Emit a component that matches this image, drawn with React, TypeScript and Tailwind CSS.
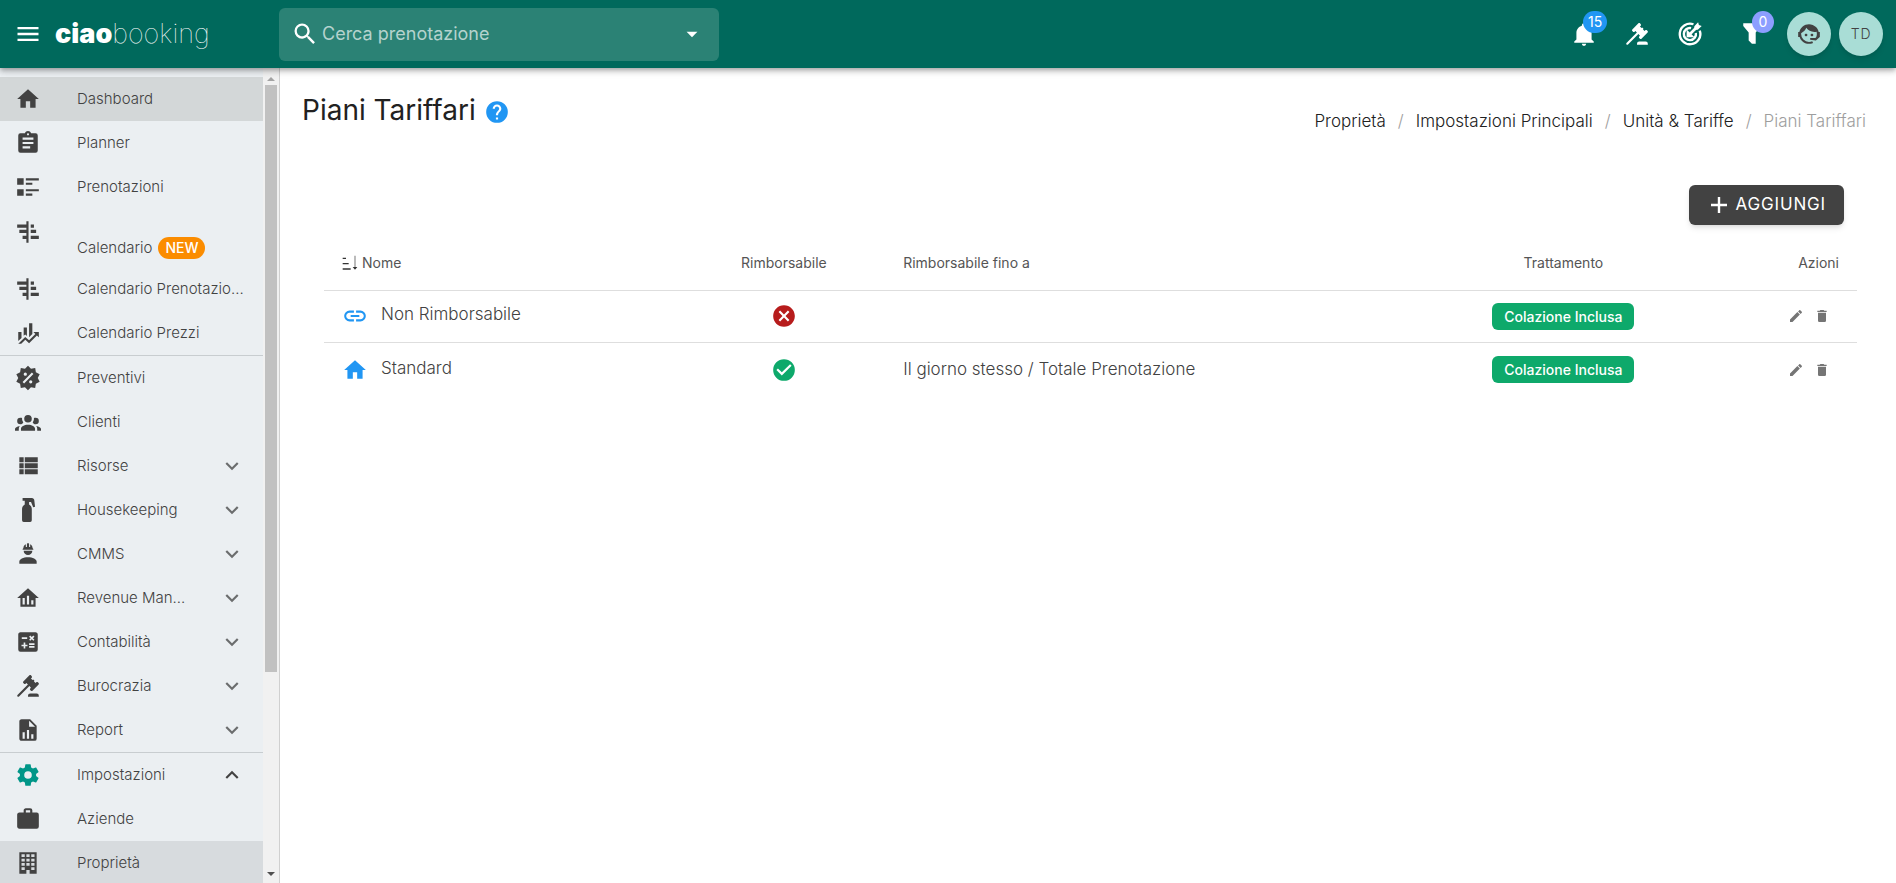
import { useState } from "react";
import type { ReactNode } from "react";
import clsx from "clsx";

type IconName = keyof typeof ICONS;

type NavItem = {
  label: string;
  icon: IconName;
  badge?: string;
  chevron?: "down" | "up";
  active?: boolean;
  current?: boolean;
  accent?: boolean;
  divider?: boolean;
};

type RatePlan = {
  name: string;
  icon: IconName;
  refundable: boolean;
  until: string;
  board: string;
};

const ICONS = {
  menu: "M3,6H21V8H3V6M3,11H21V13H3V11M3,16H21V18H3V16Z",
  magnify:
    "M9.5,3A6.5,6.5 0 0,1 16,9.5C16,11.11 15.41,12.59 14.44,13.73L14.71,14H15.5L20.5,19L19,20.5L14,15.5V14.71L13.73,14.44C12.59,15.41 11.11,16 9.5,16A6.5,6.5 0 0,1 3,9.5A6.5,6.5 0 0,1 9.5,3M9.5,5C7,5 5,7 5,9.5C5,12 7,14 9.5,14C12,14 14,12 14,9.5C14,7 12,5 9.5,5Z",
  menuDown: "M7,10L12,15L17,10H7Z",
  bell: "M21,19V20H3V19L5,17V11C5,7.9 7.03,5.17 10,4.29C10,4.19 10,4.1 10,4A2,2 0 0,1 12,2A2,2 0 0,1 14,4C14,4.1 14,4.19 14,4.29C16.97,5.17 19,7.9 19,11V17L21,19M14,21A2,2 0 0,1 12,23A2,2 0 0,1 10,21",
  filter: "M3,2H19V5L14.5,10.5V21H11L8,18V10.5L3,4.5V2Z",
  agent:
    "M18.72,14.76C19.07,13.91 19.26,13 19.26,12C19.26,11.28 19.15,10.59 18.96,9.95C18.31,10.1 17.63,10.18 16.92,10.18C13.86,10.18 11.15,8.67 9.5,6.34C8.61,8.5 6.91,10.26 4.77,11.22C4.73,11.47 4.73,11.74 4.73,12A7.27,7.27 0 0,0 12,19.27C13.05,19.27 14.06,19.04 14.97,18.63C15.54,19.72 15.8,20.26 15.78,20.26C14.14,20.81 12.87,21.08 12,21.08C9.58,21.08 7.27,20.13 5.57,18.42C4.53,17.38 3.76,16.11 3.33,14.73H2V10.18H3.09C3.93,6.04 7.6,2.92 12,2.92C14.4,2.92 16.71,3.87 18.42,5.58C19.69,6.84 20.54,8.45 20.89,10.18H22V14.73H21.94L18.38,18L13.08,17.4V15.73H17.91L18.72,14.76M9.27,11.77A1.14,1.14 0 1,1 9.27,14.04A1.14,1.14 0 1,1 9.27,11.77M14.72,11.77A1.14,1.14 0 1,1 14.72,14.04A1.14,1.14 0 1,1 14.72,11.77Z",
  home: "M10,20V14H14V20H19V12H22L12,3L2,12H5V20H10Z",
  clipboard:
    "M17,9H7V7H17M17,13H7V11H17M14,17H7V15H14M12,3A1,1 0 0,1 13,4A1,1 0 0,1 12,5A1,1 0 0,1 11,4A1,1 0 0,1 12,3M19,3H14.82C14.4,1.84 13.3,1 12,1C10.7,1 9.6,1.84 9.18,3H5A2,2 0 0,0 3,5V19A2,2 0 0,0 5,21H19A2,2 0 0,0 21,19V5A2,2 0 0,0 19,3Z",
  listText: "M2,14H8V20H2M16,8H10V10H16M2,10H8V4H2M10,4V6H22V4M10,20H16V18H10M10,16H22V14H10",
  gantt:
    "M10.5,2H12.5V22H10.5V18.5H7V15.5H10.5V13H4V10H10.5V8H2V5H10.5V2M14.5,5H17.5V8H14.5V5M14.5,10H19.5V13H14.5V10M14.5,15.5H22V18.5H14.5V15.5Z",
  finance:
    "M6,16.5L3,19.44V11H6M11,14.66L9.43,13.32L8,14.64V7H11M16,13L13,16V3H16M18.81,12.81L17,11H22V16L20.21,14.21L13,21.36L9.53,18.34L5.75,22H3L9.47,15.66L13,18.64",
  sale: "M18.65,2.85L19.26,6.71L22.77,8.5L21,12L22.78,15.5L19.24,17.29L18.63,21.15L14.74,20.54L11.97,23.3L9.19,20.5L5.33,21.14L4.71,17.25L1.22,15.47L3,11.97L1.23,8.5L4.74,6.69L5.35,2.86L9.22,3.5L12,0.69L14.77,3.46L18.65,2.85M9.5,7A1.5,1.5 0 0,0 8,8.5A1.5,1.5 0 0,0 9.5,10A1.5,1.5 0 0,0 11,8.5A1.5,1.5 0 0,0 9.5,7M14.5,14A1.5,1.5 0 0,0 13,15.5A1.5,1.5 0 0,0 14.5,17A1.5,1.5 0 0,0 16,15.5A1.5,1.5 0 0,0 14.5,14M8.41,17L17,8.41L15.59,7L7,15.59L8.41,17Z",
  group:
    "M12,5.5A3.5,3.5 0 0,1 15.5,9A3.5,3.5 0 0,1 12,12.5A3.5,3.5 0 0,1 8.5,9A3.5,3.5 0 0,1 12,5.5M5,8C5.56,8 6.08,8.15 6.53,8.42C6.38,9.85 6.8,11.27 7.66,12.38C7.16,13.34 6.16,14 5,14A3,3 0 0,1 2,11A3,3 0 0,1 5,8M19,8A3,3 0 0,1 22,11A3,3 0 0,1 19,14C17.84,14 16.84,13.34 16.34,12.38C17.2,11.27 17.62,9.85 17.47,8.42C17.92,8.15 18.44,8 19,8M5.5,18.25C5.5,16.18 8.41,14.5 12,14.5C15.59,14.5 18.5,16.18 18.5,18.25V20H5.5V18.25M0,20V18.5C0,17.11 1.89,15.94 4.45,15.6C3.86,16.28 3.5,17.22 3.5,18.25V20H0M24,20H20.5V18.25C20.5,17.22 20.14,16.28 19.55,15.6C22.11,15.94 24,17.11 24,18.5V20Z",
  viewList: "M9,4V8.5H21V4M9,19.5H21V15H9M9,14H21V9.5H9M4,8.5H8V4H4M4,19.5H8V15H4M4,14H8V9.5H4V14Z",
  spray:
    "M7,1H15.5C17,1 17.6,2 17.8,3L18.5,9L16.8,9.5L14.8,4.5H13V7C14.8,8.2 15.5,9.5 15.5,11V21.5A1.5,1.5 0 0,1 14,23H8A1.5,1.5 0 0,1 6.5,21.5V11C6.5,9.5 7.2,8.2 9,7V3.5H7V1Z",
  hardHat:
    "M12,15C7.58,15 4,16.79 4,19V21H20V19C20,16.79 16.42,15 12,15M8,9A4,4 0 0,0 12,13A4,4 0 0,0 16,9M11.5,2C11.2,2 11,2.21 11,2.5V5.5H10V3C10,3 7.75,3.86 7.75,6.75C7.75,6.75 7,6.89 7,8H17C16.95,6.89 16.25,6.75 16.25,6.75C16.25,3.86 14,3 14,3V5.5H13V2.5C13,2.21 12.81,2 12.5,2H11.5Z",
  homeChart: "M12,3L2,12H5V20H19V12H22L12,3M9,18H7V12H9V18M13,18H11V10H13V18M17,18H15V14H17V18Z",
  calculator:
    "M19,3H5C3.89,3 3,3.89 3,5V19A2,2 0 0,0 5,21H19A2,2 0 0,0 21,19V5C21,3.89 20.1,3 19,3M13.03,7.06L14.09,6L15.5,7.41L16.91,6L17.97,7.06L16.56,8.47L17.97,9.88L16.91,10.94L15.5,9.54L14.09,10.95L13.03,9.89L14.44,8.47L13.03,7.06M6.25,7.72H11.25V9.22H6.25V7.72M11.5,16H9.5V18H8V16H6V14.5H8V12.5H9.5V14.5H11.5V16M18,17.25H13V15.75H18V17.25M18,14.75H13V13.25H18V14.75Z",
  gavel:
    "M2.3,20.28L11.9,10.68L10.5,9.26L9.78,9.97C9.39,10.36 8.76,10.36 8.37,9.97L7.66,9.26C7.27,8.87 7.27,8.24 7.66,7.85L13.32,2.19C13.71,1.8 14.34,1.8 14.73,2.19L15.44,2.9C15.83,3.29 15.83,3.92 15.44,4.31L14.73,5L16.15,6.43C16.54,6.04 17.17,6.04 17.56,6.43C17.95,6.82 17.95,7.46 17.56,7.85L18.97,9.26L19.68,8.55C20.07,8.16 20.71,8.16 21.1,8.55L21.8,9.26C22.19,9.65 22.19,10.29 21.8,10.68L16.15,16.33C15.76,16.72 15.12,16.72 14.73,16.33L14.03,15.63C13.63,15.24 13.63,14.6 14.03,14.21L14.73,13.5L13.32,12.09L3.71,21.7C3.32,22.09 2.69,22.09 2.3,21.7C1.91,21.31 1.91,20.67 2.3,20.28M20,19A2,2 0 0,1 22,21V22H12V21A2,2 0 0,1 14,19H20Z",
  fileChart:
    "M13,9H18.5L13,3.5V9M6,2H14L20,8V20A2,2 0 0,1 18,22H6C4.89,22 4,21.1 4,20V4C4,2.89 4.89,2 6,2M7,20H9V14H7V20M11,20H13V12H11V20M15,20H17V16H15V20Z",
  cog: "M12,15.5A3.5,3.5 0 0,1 8.5,12A3.5,3.5 0 0,1 12,8.5A3.5,3.5 0 0,1 15.5,12A3.5,3.5 0 0,1 12,15.5M19.43,12.97C19.47,12.65 19.5,12.33 19.5,12C19.5,11.67 19.47,11.34 19.43,11L21.54,9.37C21.73,9.22 21.78,8.95 21.66,8.73L19.66,5.27C19.54,5.05 19.27,4.96 19.05,5.05L16.56,6.05C16.04,5.66 15.5,5.32 14.87,5.07L14.5,2.42C14.46,2.18 14.25,2 14,2H10C9.75,2 9.54,2.18 9.5,2.42L9.13,5.07C8.5,5.32 7.96,5.66 7.44,6.05L4.95,5.05C4.73,4.96 4.46,5.05 4.34,5.27L2.34,8.73C2.21,8.95 2.27,9.22 2.46,9.37L4.57,11C4.53,11.34 4.5,11.67 4.5,12C4.5,12.33 4.53,12.65 4.57,12.97L2.46,14.63C2.27,14.78 2.21,15.05 2.34,15.27L4.34,18.73C4.46,18.95 4.73,19.03 4.95,18.95L7.44,17.94C7.96,18.34 8.5,18.68 9.13,18.93L9.5,21.58C9.54,21.82 9.75,22 10,22H14C14.25,22 14.46,21.82 14.5,21.58L14.87,18.93C15.5,18.67 16.04,18.34 16.56,17.94L19.05,18.95C19.27,19.03 19.54,18.95 19.66,18.73L21.66,15.27C21.78,15.05 21.73,14.78 21.54,14.63L19.43,12.97Z",
  briefcase:
    "M10,2H14A2,2 0 0,1 16,4V6H20A2,2 0 0,1 22,8V19A2,2 0 0,1 20,21H4C2.89,21 2,20.1 2,19V8C2,6.89 2.89,6 4,6H8V4C8,2.89 8.89,2 10,2M14,6V4H10V6H14Z",
  building:
    "M4,2V22H10.5V18.5H13.5V22H20V2H4M6,4H9V6.5H6V4M10.5,4H13.5V6.5H10.5V4M15,4H18V6.5H15V4M6,8H9V10.5H6V8M10.5,8H13.5V10.5H10.5V8M15,8H18V10.5H15V8M6,12H9V14.5H6V12M10.5,12H13.5V14.5H10.5V12M15,12H18V14.5H15V12M6,16H9V18.5H6V16M15,16H18V18.5H15V16Z",
  chevronDown: "M7.41,8.58L12,13.17L16.59,8.58L18,10L12,16L6,10L7.41,8.58Z",
  chevronUp: "M7.41,15.41L12,10.83L16.59,15.41L18,14L12,8L6,14L7.41,15.41Z",
  help: "M12,2A10,10 0 1,0 22,12A10,10 0 0,0 12,2M13,19H11V17H13V19M15.07,11.25L14.17,12.17C13.45,12.9 13,13.5 13,15H11V14.5C11,13.39 11.45,12.39 12.17,11.67L13.41,10.41C13.78,10.05 14,9.55 14,9C14,7.89 13.1,7 12,7A2,2 0 0,0 10,9H8A4,4 0 0,1 12,5A4,4 0 0,1 16,9C16,9.88 15.64,10.67 15.07,11.25Z",
  plus: "M20,13.2H13.2V20H10.8V13.2H4V10.8H10.8V4H13.2V10.8H20V13.2Z",
  sort: "M20,18H23L19.5,22L16,18H19V1H20V18M1,20H13V22H1M6,4V6H1V4M1,12H10V14H1V12Z",
  link: "M3.9,12C3.9,10.29 5.29,8.9 7,8.9H11V7H7A5,5 0 0,0 2,12A5,5 0 0,0 7,17H11V15.1H7C5.29,15.1 3.9,13.71 3.9,12M8,13H16V11H8V13M17,7H13V8.9H17C18.71,8.9 20.1,10.29 20.1,12C20.1,13.71 18.71,15.1 17,15.1H13V17H17A5,5 0 0,0 22,12A5,5 0 0,0 17,7Z",
  closeCircle:
    "M12,2C17.53,2 22,6.47 22,12C22,17.53 17.53,22 12,22C6.47,22 2,17.53 2,12C2,6.47 6.47,2 12,2M15.59,7L12,10.59L8.41,7L7,8.41L10.59,12L7,15.59L8.41,17L12,13.41L15.59,17L17,15.59L13.41,12L17,8.41L15.59,7Z",
  checkCircle:
    "M12,2A10,10 0 0,1 22,12A10,10 0 0,1 12,22A10,10 0 0,1 2,12A10,10 0 0,1 12,2M10,17L19,8L17.59,6.58L10,14.17L6.41,10.59L5,12L10,17Z",
  pencil:
    "M20.71,7.04C21.1,6.65 21.1,6 20.71,5.63L18.37,3.29C18,2.9 17.35,2.9 16.96,3.29L15.12,5.12L18.87,8.87M3,17.25V21H6.75L17.81,9.93L14.06,6.18L3,17.25Z",
  trash: "M19,4H15.5L14.5,3H9.5L8.5,4H5V6H19M6,19A2,2 0 0,0 8,21H16A2,2 0 0,0 18,19V7H6V19Z",
};

const NAV: NavItem[] = [
  { label: "Dashboard", icon: "home", active: true },
  { label: "Planner", icon: "clipboard" },
  { label: "Prenotazioni", icon: "listText" },
  { label: "Calendario", icon: "gantt", badge: "NEW" },
  { label: "Calendario Prenotazio...", icon: "gantt" },
  { label: "Calendario Prezzi", icon: "finance" },
  { label: "Preventivi", icon: "sale", divider: true },
  { label: "Clienti", icon: "group" },
  { label: "Risorse", icon: "viewList", chevron: "down" },
  { label: "Housekeeping", icon: "spray", chevron: "down" },
  { label: "CMMS", icon: "hardHat", chevron: "down" },
  { label: "Revenue Man...", icon: "homeChart", chevron: "down" },
  { label: "Contabilità", icon: "calculator", chevron: "down" },
  { label: "Burocrazia", icon: "gavel", chevron: "down" },
  { label: "Report", icon: "fileChart", chevron: "down" },
  { label: "Impostazioni", icon: "cog", chevron: "up", accent: true, divider: true },
  { label: "Aziende", icon: "briefcase" },
  { label: "Proprietà", icon: "building", current: true },
];

const PLANS: RatePlan[] = [
  { name: "Non Rimborsabile", icon: "link", refundable: false, until: "", board: "Colazione Inclusa" },
  {
    name: "Standard",
    icon: "home",
    refundable: true,
    until: "Il giorno stesso / Totale Prenotazione",
    board: "Colazione Inclusa",
  },
];

const CRUMBS = ["Proprietà", "Impostazioni Principali", "Unità & Tariffe"];

function Icon({ name, className }: { name: IconName; className?: string }) {
  return (
    <svg viewBox="0 0 24 24" fill="currentColor" aria-hidden="true" className={clsx("shrink-0", className)}>
      <path d={ICONS[name]} />
    </svg>
  );
}

function TargetIcon() {
  return (
    <svg viewBox="0 0 24 24" fill="none" stroke="currentColor" strokeWidth="2.2" aria-hidden="true" className="size-[26px]">
      <path d="M15.2 3A9.5 9.5 0 1 0 21 8.8" />
      <path d="M13 6.6A5.6 5.6 0 1 0 17.4 11" />
      <path d="M10.5 13.5L18 6" strokeWidth="2.6" />
      <path d="M10 10.5V14H13.5Z" fill="currentColor" />
      <path d="M16 8V4.8L19.5 1.2L20.2 3.8L22.8 4.5L19.2 8Z" fill="currentColor" stroke="none" />
    </svg>
  );
}

function HeaderButton({ label, badge, badgeClass, children }: {
  label: string;
  badge?: string;
  badgeClass?: string;
  children: ReactNode;
}) {
  return (
    <button type="button" aria-label={label} className="relative flex size-[26px] items-center justify-center">
      {children}
      {badge && (
        <span
          className={clsx(
            "absolute -top-2.5 left-3 flex h-[22px] min-w-[22px] items-center justify-center rounded-full px-[5px] text-sm",
            badgeClass,
          )}
        >
          {badge}
        </span>
      )}
    </button>
  );
}

function Header() {
  const [query, setQuery] = useState("");

  return (
    <header className="relative z-10 flex h-[68px] shrink-0 items-center bg-[#00695c] pr-[13px] text-white shadow-[0_2px_4px_-1px_rgba(0,0,0,0.2),0_4px_5px_rgba(0,0,0,0.14),0_1px_10px_rgba(0,0,0,0.12)]">
      <div className="flex w-[279px] shrink-0 items-center gap-[13px] pl-[14px]">
        <button type="button" aria-label="Menu">
          <Icon name="menu" className="size-7" />
        </button>
        <a href="#" className="text-[27px] leading-8">
          <span className="font-black">ciao</span>
          <span className="font-thin">booking</span>
        </a>
      </div>

      <label className="flex h-[53px] w-[440px] items-center gap-[3px] rounded-md bg-[#2b8275] pl-3 pr-[14px]">
        <Icon name="magnify" className="size-7" />
        <input
          value={query}
          onChange={(e) => setQuery(e.target.value)}
          placeholder="Cerca prenotazione"
          aria-label="Cerca prenotazione"
          className="min-w-0 flex-1 bg-transparent text-lg outline-none placeholder:text-[#b5d3ce]"
        />
        <Icon name="menuDown" className="size-[26px]" />
      </label>

      <div className="ml-auto flex items-center">
        <div className="mr-[21px] flex items-center gap-[27px]">
          <HeaderButton label="Notifiche" badge="15" badgeClass="bg-[#2196f3]">
            <Icon name="bell" className="size-[26px]" />
          </HeaderButton>
          <HeaderButton label="Burocrazia">
            <Icon name="gavel" className="size-[26px]" />
          </HeaderButton>
          <HeaderButton label="Obiettivi">
            <TargetIcon />
          </HeaderButton>
          <div className="ml-2.5">
            <HeaderButton label="Filtri" badge="0" badgeClass="bg-[#8c9eff]">
              <Icon name="filter" className="size-[26px]" />
            </HeaderButton>
          </div>
        </div>
        <div className="flex gap-2">
          <button
            type="button"
            aria-label="Assistenza"
            className="flex size-11 items-center justify-center rounded-full bg-[#a9ddd6] text-[#424242] shadow-md"
          >
            <Icon name="agent" className="size-[26px]" />
          </button>
          <button
            type="button"
            className="flex size-11 items-center justify-center rounded-full bg-[#a9ddd6] text-sm font-light tracking-wider text-[#424242] shadow-md"
          >
            TD
          </button>
        </div>
      </div>
    </header>
  );
}

function NavLink({ item }: { item: NavItem }) {
  return (
    <li className={clsx(item.divider && "border-t border-[#c8cdd0]")}>
      <a
        href="#"
        className={clsx(
          "flex pl-[15px] text-[#424242]",
          item.badge ? "h-[58px] items-start pt-2.5" : "h-11 items-center",
          item.active && "bg-[#d3d7d8]",
          item.current && "bg-[#d7dbde]",
        )}
      >
        <Icon name={item.icon} className={clsx("size-[26px]", item.accent && "text-[#009688]")} />
        <span
          className={clsx(
            "ml-9 flex-1 whitespace-nowrap text-[15px] font-light",
            item.badge ? "pt-[17px] leading-6" : "leading-5",
          )}
        >
          {item.label}
          {item.badge && (
            <span className="ml-1.5 inline-block rounded-full bg-[#fb8c00] px-[7px] text-sm font-medium leading-[22px] text-white">
              {item.badge}
            </span>
          )}
        </span>
        {item.chevron && (
          <Icon
            name={item.chevron === "up" ? "chevronUp" : "chevronDown"}
            className={clsx("mr-[18px] size-[26px]", item.chevron === "down" && "text-[#6b6d6e]")}
          />
        )}
      </a>
    </li>
  );
}

function Sidebar() {
  return (
    <aside className="flex w-[280px] shrink-0 overflow-hidden border-r border-[#d0d0d0] bg-[#ebeff2]">
      <nav className="w-[263px] shrink-0 pt-[9px]">
        <ul>
          {NAV.map((item) => (
            <NavLink key={item.label} item={item} />
          ))}
        </ul>
      </nav>
      {/* scrollbar */}
      <div className="flex flex-1 flex-col items-center bg-[#f1f1f1]">
        <div className="flex h-[17px] shrink-0 items-center pt-1">
          <svg viewBox="0 0 8 4" className="w-2 text-[#a3a3a3]" fill="currentColor">
            <path d="M0 4L4 0L8 4Z" />
          </svg>
        </div>
        <div className="h-[72%] w-3 bg-[#c1c1c1]" />
        <svg viewBox="0 0 8 4" className="mb-[7px] mt-auto w-2 text-[#505050]" fill="currentColor">
          <path d="M0 0L4 4L8 0Z" />
        </svg>
      </div>
    </aside>
  );
}

function PlansTable() {
  return (
    <table className="w-full table-fixed text-left text-[#424242]">
      <thead>
        <tr className="h-[54px] border-b border-[#dedede] text-sm text-[#555555]">
          <th className="w-[23%] pl-[18px] font-normal">
            <span className="flex items-center gap-1">
              <Icon name="sort" className="size-4 text-[#333333]" />
              Nome
            </span>
          </th>
          <th className="w-[14%] text-center font-normal">Rimborsabile</th>
          <th className="w-[36%] pl-3 font-normal">Rimborsabile fino a</th>
          <th className="w-[15.7%] text-center font-normal">Trattamento</th>
          <th className="pr-[18px] text-right font-normal">Azioni</th>
        </tr>
      </thead>
      <tbody className="text-[17px] font-light">
        {PLANS.map((plan) => (
          <tr key={plan.name} className="h-[52px] border-b border-[#dedede] last:h-[55px] last:border-0">
            <td className="pl-[18px]">
              <span className="flex items-center gap-[13px]">
                <Icon name={plan.icon} className="size-[26px] text-[#2196f3]" />
                <span className="pb-0.5">{plan.name}</span>
              </span>
            </td>
            <td>
              <Icon
                name={plan.refundable ? "checkCircle" : "closeCircle"}
                className={clsx("mx-auto size-[26px]", plan.refundable ? "text-[#0ea96b]" : "text-[#b71c1c]")}
              />
            </td>
            <td className="pl-3">{plan.until}</td>
            <td className="text-center">
              <span className="inline-block rounded-md bg-[#0ea96b] px-3 text-sm font-medium leading-[27px] text-white">
                {plan.board}
              </span>
            </td>
            <td className="pr-[27px]">
              <span className="flex justify-end gap-2.5 text-[#757575]">
                <button type="button" aria-label="Modifica">
                  <Icon name="pencil" className="size-4" />
                </button>
                <button type="button" aria-label="Elimina">
                  <Icon name="trash" className="size-4" />
                </button>
              </span>
            </td>
          </tr>
        ))}
      </tbody>
    </table>
  );
}

export default function App() {
  return (
    <div className="flex h-screen flex-col overflow-hidden bg-white font-['Inter','Liberation_Sans',sans-serif] text-[#212121]">
      <Header />
      <div className="flex min-h-0 flex-1">
        <Sidebar />
        <main className="min-w-0 flex-1 pl-[22px] pr-[30px] pt-6">
          <div className="flex items-start justify-between">
            <h1 className="flex items-center gap-2 text-[28px] leading-9">
              Piani Tariffari
              <Icon name="help" className="mt-1 size-[26px] text-[#2196f3]" />
            </h1>
            <nav aria-label="Percorso" className="pt-[17px]">
              <ol className="flex text-[17px] font-light leading-6">
                {CRUMBS.map((crumb) => (
                  <li key={crumb}>
                    <a href="#">{crumb}</a>
                    <span className="px-3 text-[#9e9e9e]">/</span>
                  </li>
                ))}
                <li className="text-[#9e9e9e]">Piani Tariffari</li>
              </ol>
            </nav>
          </div>

          <div className="pl-[22px] pr-[9px] pt-[52px]">
            <div className="mb-[11px] flex justify-end pr-[13px]">
              <button
                type="button"
                className="flex h-10 items-center gap-1 rounded-md bg-[#424242] px-[18px] text-[17px] tracking-wider text-white shadow-md"
              >
                <Icon name="plus" className="size-6" />
                AGGIUNGI
              </button>
            </div>
            <PlansTable />
          </div>
        </main>
      </div>
    </div>
  );
}
